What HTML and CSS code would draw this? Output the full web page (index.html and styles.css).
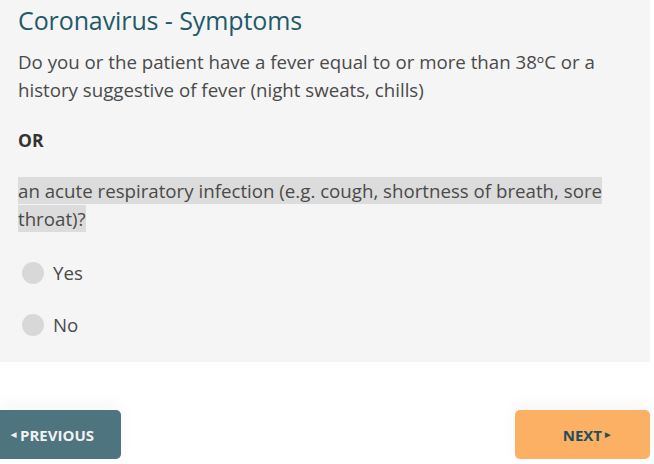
FILE: index.html
```html
<!DOCTYPE html>
<html lang="en">
<head>
    <meta charset="UTF-8">
    <meta name="viewport" content="width=device-width, initial-scale=1.0">
    <title>Coronavirus - Symptoms</title>
    <link rel="stylesheet" href="styles.css">
</head>
<body>

    <div class="panel">
        <h1 class="title">Coronavirus - Symptoms</h1>

        <p class="question">
            Do you or the patient have a fever equal to or more than 38ᵒC or a
            history suggestive of fever (night sweats, chills)
        </p>

        <p class="or">OR</p>

        <p class="question question-alt">
            <span class="selected">an acute respiratory infection (e.g. cough, shortness of breath, sore throat)?</span>
        </p>

        <div class="options">
            <label class="option"><span class="radio"></span>Yes</label>
            <label class="option"><span class="radio"></span>No</label>
        </div>
    </div>

    <div class="nav">
        <button class="btn btn-prev"><span class="arrow">&#9664;</span>PREVIOUS</button>
        <button class="btn btn-next">NEXT<span class="arrow">&#9654;</span></button>
    </div>

</body>
</html>
```

FILE: styles.css
```css
body {
    margin: 0;
    background: #ffffff;
    font-family: "Open Sans", "Noto Sans", sans-serif;
    color: #4a4a4a;
}

.panel {
    width: 650px;
    box-sizing: border-box;
    background: #f5f5f5;
    padding: 4px 30px 22px 18px;
}

.title {
    margin: 0;
    font-size: 25px;
    font-weight: 400;
    line-height: 32px;
    color: #1f5a6a;
    letter-spacing: -0.1px;
}

.question {
    margin: 12px 0 0 0;
    font-size: 18.7px;
    line-height: 28px;
}

.or {
    margin: 22px 0 0 0;
    font-size: 17.5px;
    font-weight: 700;
    line-height: 28px;
    color: #333;
}

.question-alt {
    margin-top: 23px;
}

.selected {
    background: #dcdcdc;
    padding: 1.3px 0 1.3px 0;
}

.options {
    margin-top: 25px;
    padding-left: 4px;
    display: flex;
    flex-direction: column;
    gap: 22px;
}

.option {
    display: flex;
    align-items: center;
    gap: 9px;
    font-size: 18.7px;
    line-height: 30px;
}

.radio {
    width: 22px;
    height: 22px;
    border-radius: 50%;
    background: #d8d8d8;
}

.nav {
    display: flex;
    justify-content: space-between;
    padding: 48px 4px 0 0;
}

.btn {
    height: 49px;
    border: none;
    border-radius: 5px;
    font-family: "Open Sans", "Noto Sans", sans-serif;
    font-size: 15px;
    font-weight: 700;
    display: flex;
    align-items: center;
    box-shadow: 0 -6px 18px rgba(0, 0, 0, 0.04);
}

.btn-prev {
    width: 121px;
    background: #4e7480;
    color: #f1f1f1;
    padding: 0 0 0 11px;
    border-top-left-radius: 0;
    border-bottom-left-radius: 0;
}

.btn-next {
    width: 135px;
    background: #fbb064;
    color: #1f4e5c;
    justify-content: flex-end;
    padding: 0 40px 0 0;
}

.arrow {
    font-size: 7px;
    margin: 0 4px 0 0;
}

.btn-next .arrow {
    margin: 0 0 0 3px;
}
```
